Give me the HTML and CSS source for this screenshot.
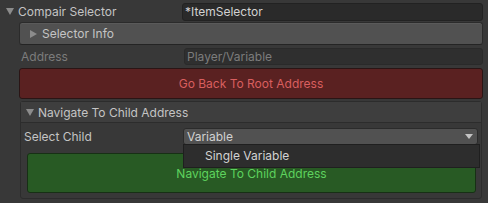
FILE: index.html
```html
<!DOCTYPE html>
<html lang="en">
<head>
    <meta charset="UTF-8">
    <title>Compair Selector</title>
    <link rel="stylesheet" href="styles.css">
</head>
<body>
    <div class="inspector">
        <div class="row top-row">
            <span class="arrow-down"></span>
            <span class="label top-label">Compair Selector</span>
            <div class="field">*ItemSelector</div>
        </div>

        <div class="indent">
            <div class="foldout-box">
                <span class="arrow-right"></span>
                <span>Selector Info</span>
            </div>

            <div class="row address-row">
                <span class="label muted">Address</span>
                <div class="field disabled">Player/Variable</div>
            </div>

            <div class="btn btn-red">Go Back To Root Address</div>

            <div class="group">
                <div class="group-header">
                    <span class="arrow-down"></span>
                    <span>Navigate To Child Address</span>
                </div>
                <div class="row child-row">
                    <span class="label child-label">Select Child</span>
                    <div class="dropdown">
                        <span>Variable</span>
                        <span class="caret"></span>
                    </div>
                </div>
                <div class="btn btn-green">Navigate To Child Address</div>
            </div>
        </div>

        <div class="popup">Single Variable</div>
    </div>
</body>
</html>
```

FILE: styles.css
```css
body {
    margin: 0;
    background-color: #383838;
    color: #c4c4c4;
    font-family: 'Inter', 'Liberation Sans', sans-serif;
    font-size: 12px;
}
.inspector {
    position: relative;
    padding: 3px 5px 0 0;
}
.row {
    display: flex;
    align-items: center;
}
.label {
    flex: none;
}
.top-row {
    height: 17px;
}
.top-row .arrow-down {
    margin-left: 6px;
}
.top-label {
    width: 164px;
    margin-left: 4px;
}
.field {
    flex: 1;
    height: 16px;
    line-height: 16px;
    padding-left: 2px;
    background-color: #2a2a2a;
    border: 1px solid #222;
    border-radius: 3px;
    color: #d2d2d2;
}
.field.disabled {
    background-color: #2f2f2f;
    color: #7c7c7c;
    border-color: #2a2a2a;
}
.muted {
    color: #7c7c7c;
}
.arrow-down {
    width: 0;
    height: 0;
    border-left: 4px solid transparent;
    border-right: 4px solid transparent;
    border-top: 7px solid #8c8c8c;
}
.arrow-right {
    width: 0;
    height: 0;
    border-top: 4px solid transparent;
    border-bottom: 4px solid transparent;
    border-left: 7px solid #8c8c8c;
    margin: 0 5px 0 10px;
}
.indent {
    margin-left: 19px;
}
.foldout-box {
    display: flex;
    align-items: center;
    height: 21px;
    margin-top: 2px;
    background-color: #515151;
    border: 1px solid #2b2b2b;
    border-bottom-color: #242424;
    border-radius: 3px;
    box-shadow: inset 0 1px 0 #5a5a5a;
}
.address-row {
    height: 19px;
    margin-top: 2px;
}
.address-row .label {
    width: 163px;
    margin-left: 2px;
}
.address-row .field {
    height: 15px;
    line-height: 15px;
}
.btn {
    display: flex;
    align-items: center;
    justify-content: center;
    border-radius: 3px;
}
.btn-red {
    height: 29px;
    margin-top: 2px;
    background-color: #5a2121;
    border: 1px solid #2a1515;
    color: #d95f5f;
}
.group {
    margin-top: 2px;
    margin-right: 1px;
    margin-left: 1px;
    border: 1px solid #2c2c2c;
    border-radius: 3px;
    padding-bottom: 5px;
}
.group-header {
    display: flex;
    align-items: center;
    height: 20px;
    background-color: #3e3e3e;
    border-bottom: 1px solid #2c2c2c;
}
.group-header .arrow-down {
    margin: 0 4px 0 5px;
}
.child-row {
    height: 18px;
    margin-top: 4px;
}
.child-label {
    width: 159px;
    margin-left: 3px;
}
.dropdown {
    flex: 1;
    display: flex;
    align-items: center;
    justify-content: space-between;
    height: 15px;
    margin-right: 3px;
    padding: 0 4px 0 3px;
    background-color: #515151;
    border: 1px solid #2b2b2b;
    border-radius: 3px;
    color: #d2d2d2;
}
.caret {
    width: 0;
    height: 0;
    border-left: 4px solid transparent;
    border-right: 4px solid transparent;
    border-top: 5px solid #c4c4c4;
}
.btn-green {
    height: 38px;
    margin: 8px 5px 0 6px;
    background-color: #285a24;
    border: 1px solid #173015;
    color: #5ed35e;
}
.popup {
    position: absolute;
    top: 144px;
    left: 183px;
    width: 274px;
    height: 22px;
    line-height: 22px;
    padding-left: 21px;
    background-color: #2d2d2d;
    border: 1px solid #1f1f1f;
    color: #d2d2d2;
}
```
